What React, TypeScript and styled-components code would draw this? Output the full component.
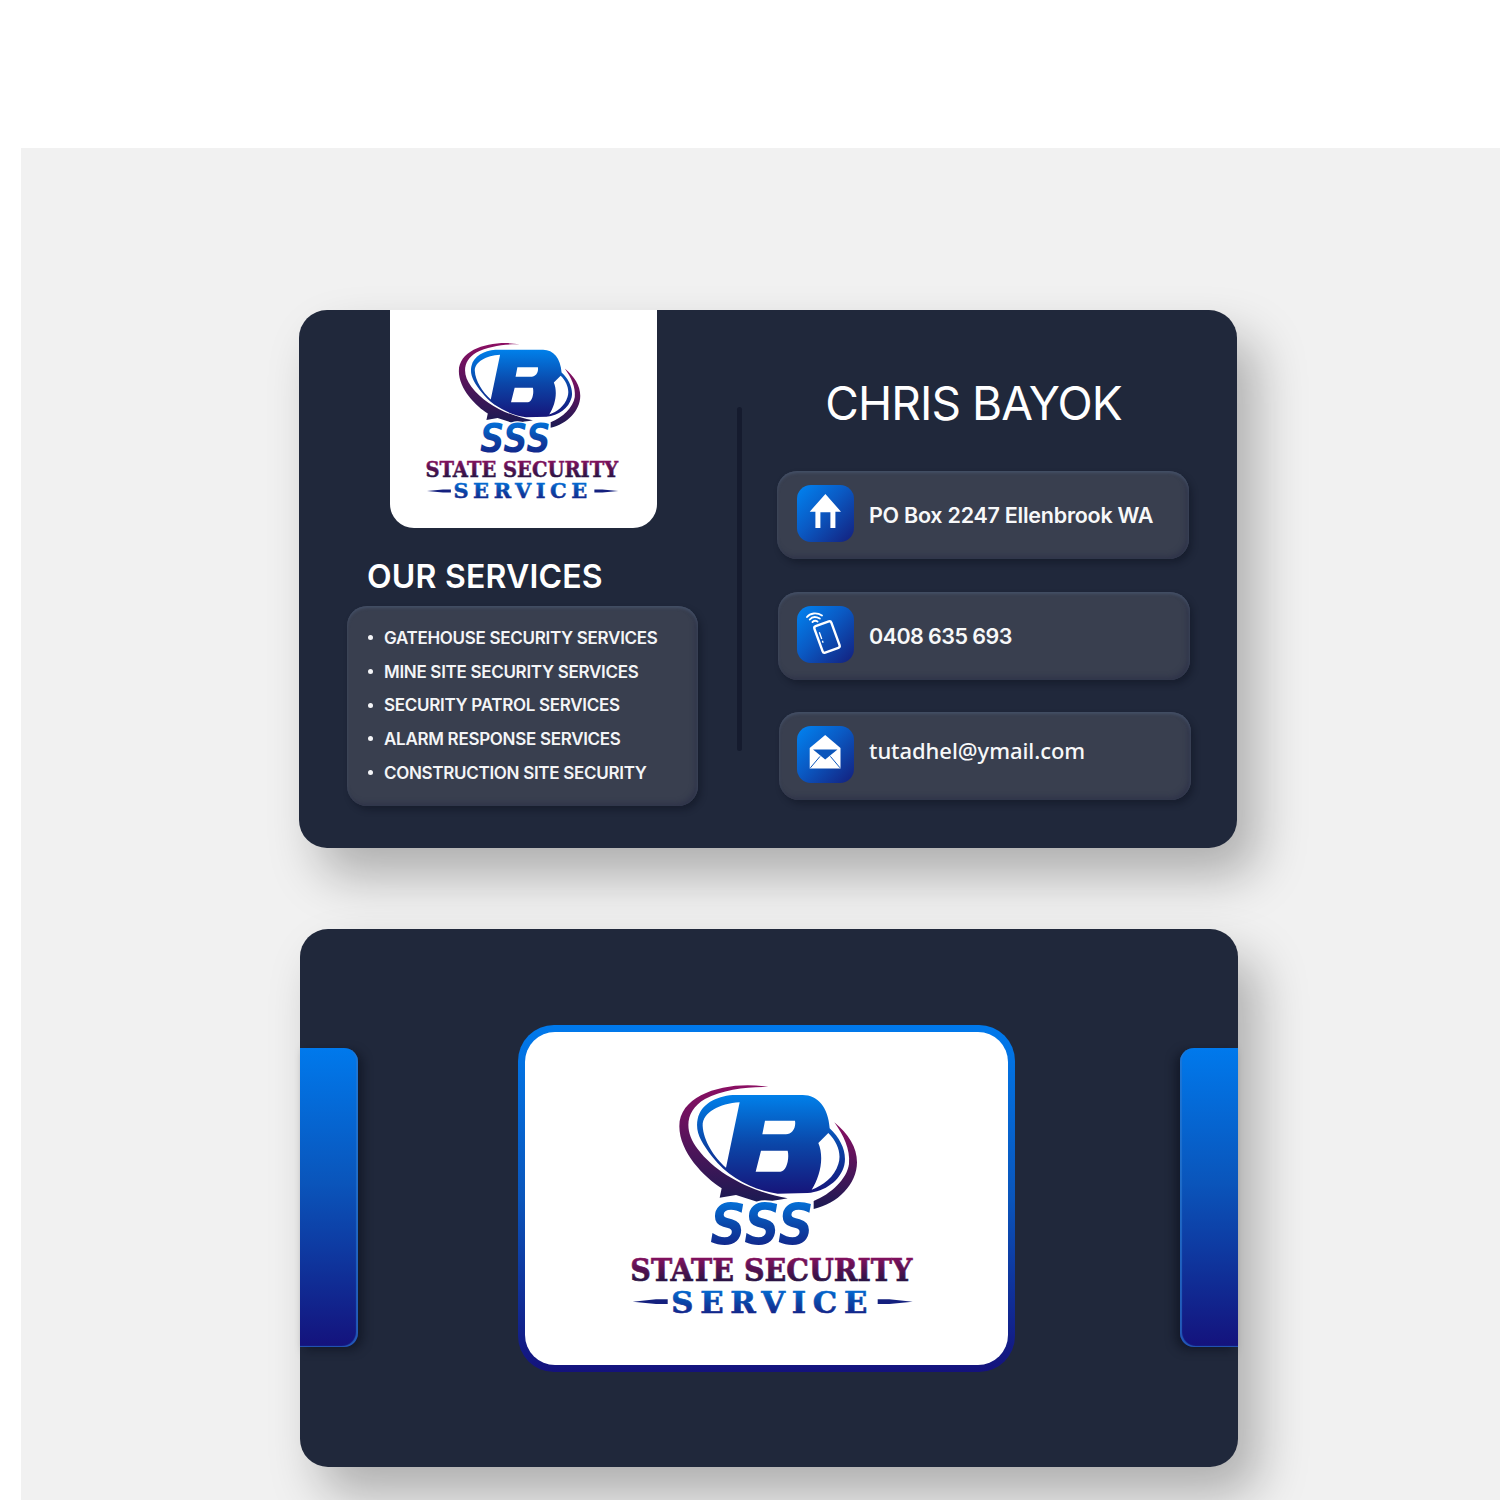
import React from 'react'
import styled, { createGlobalStyle } from 'styled-components'

const GlobalStyle = createGlobalStyle`
  html, body {
    margin: 0;
    padding: 0;
    background: #ffffff;
  }
`

const Page = styled.div`
  width: 1500px;
  height: 1500px;
  padding: 148px 0 0 21px;
  box-sizing: border-box;
  overflow: hidden;
`

const Backdrop = styled.div`
  height: 1352px;
  padding: 162px 0 0 278px;
  box-sizing: border-box;
  background: #f1f1f1;
  display: flex;
  flex-direction: column;
  gap: 81px;
  overflow: hidden;
`

const Card = styled.section<{ $shift?: number }>`
  width: 938px;
  height: 538px;
  flex: none;
  margin-left: ${(p) => p.$shift || 0}px;
  border-radius: 28px;
  background: #20283b;
  box-shadow: 20px 28px 50px rgba(0, 0, 0, 0.28);
  display: flex;
  overflow: visible;
`

const LeftColumn = styled.div`
  width: 398px;
  margin-left: 48px;
  flex: none;
  display: flex;
  flex-direction: column;
`

const LogoTab = styled.div`
  width: 267px;
  height: 218px;
  margin-left: 42.5px;
  padding: 22px 3px 0 0;
  box-sizing: border-box;
  background: #ffffff;
  border-radius: 0 0 24px 24px;
  display: flex;
  justify-content: center;
  align-items: flex-start;
`

const ServicesTitle = styled.h2`
  margin: 29px 0 9px 20px;
  color: #ffffff;
  font-family: Inter, "Noto Sans", sans-serif;
  font-size: 32px;
  line-height: 40px;
  font-weight: 600;
  letter-spacing: 0.2px;
`

const ServicesBox = styled.ul`
  width: 351px;
  height: 200px;
  margin: 0;
  padding: 15px 0 0 21px;
  box-sizing: border-box;
  list-style: none;
  background: #393f4f;
  border-radius: 20px;
  box-shadow: inset 0 2px 3px #445067, inset -3px -3px 5px #30354a, 3px 4px 6px rgba(10, 14, 28, 0.4);
`

const ServiceItem = styled.li`
  height: 33.7px;
  display: flex;
  align-items: center;
  gap: 11px;
  color: #f4f5f7;
  font-family: Inter, "Noto Sans", sans-serif;
  font-size: 17px;
  font-weight: 600;
  letter-spacing: -0.3px;
  white-space: nowrap;

  &::before {
    content: '';
    width: 5px;
    height: 5px;
    border-radius: 50%;
    background: #f4f5f7;
  }
`

const Divider = styled.div`
  width: 5px;
  height: 344px;
  margin: 97px 0 0 -8px;
  flex: none;
  border-radius: 3px;
  background: #151b2e;
`

const RightColumn = styled.div`
  margin-left: 35px;
  display: flex;
  flex-direction: column;
  align-items: flex-start;
`

const Name = styled.h1`
  width: 413px;
  height: 161px;
  margin: 0;
  padding-top: 62px;
  box-sizing: border-box;
  color: #ffffff;
  font-family: Inter, "Noto Sans", sans-serif;
  font-size: 46px;
  line-height: 62px;
  font-weight: 400;
  letter-spacing: -0.9px;
  white-space: nowrap;
  text-align: center;
  transform: translateX(-10px);
`

const ContactRow = styled.div<{ $shift: number; $gap: number }>`
  width: 412px;
  height: 88px;
  margin-left: ${(p) => p.$shift}px;
  margin-top: ${(p) => p.$gap}px;
  padding-left: ${(p) => 20 - p.$shift}px;
  box-sizing: border-box;
  border-radius: 20px;
  background: #393f4f;
  box-shadow: inset 0 2px 3px #445067, inset -3px -3px 5px #30354a, 3px 4px 6px rgba(10, 14, 28, 0.4);
  display: flex;
  align-items: center;
  gap: 15px;
`

const IconBadge = styled.div`
  width: 57px;
  height: 57px;
  margin-bottom: 3px;
  flex: none;
  border-radius: 14px;
  background: linear-gradient(135deg, #0084f2 0%, #0a5ac4 45%, #141f7c 100%);
  display: flex;
`

const ContactText = styled.span<{ $spacing: number }>`
  color: #f7f8f9;
  font-family: Inter, "Noto Sans", sans-serif;
  font-size: 21.5px;
  font-weight: 600;
  letter-spacing: ${(p) => p.$spacing}px;
  white-space: nowrap;
`

const EmailText = styled.span`
  margin-bottom: 13px;
  color: #f7f8f9;
  font-family: "Noto Sans", sans-serif;
  font-size: 22px;
  font-weight: 500;
  letter-spacing: -0.05px;
  white-space: nowrap;
`

const BackContent = styled.div`
  width: 100%;
  display: flex;
  justify-content: space-between;
  align-items: center;
`

const SideTab = styled.div<{ $side: 'left' | 'right' }>`
  width: 58px;
  height: 299px;
  margin-top: -1px;
  background: linear-gradient(180deg, #0079ec 0%, #0a55bb 45%, #14127c 100%);
  border-radius: ${(p) => (p.$side === 'left' ? '0 14px 14px 0' : '14px 0 0 14px')};
  box-shadow: ${(p) =>
    p.$side === 'left'
      ? 'inset -2px -1px 1px rgba(42, 120, 208, 0.7), 5px 3px 10px rgba(8, 12, 24, 0.5)'
      : 'inset 2px -1px 1px rgba(42, 120, 208, 0.7), -5px 3px 10px rgba(8, 12, 24, 0.5)'};
`

const LogoFrame = styled.div`
  width: 497px;
  height: 347px;
  margin: 1px 5px 0 0;
  padding: 7px;
  box-sizing: border-box;
  border-radius: 36px;
  background: linear-gradient(180deg, #0079ec 0%, #0a55bb 50%, #14127c 100%);
`

const LogoPanel = styled.div`
  width: 100%;
  height: 100%;
  padding-left: 8px;
  box-sizing: border-box;
  border-radius: 30px;
  background: #ffffff;
  display: flex;
  align-items: center;
  justify-content: center;
`

const LogoSvg = styled.svg`
  display: block;
  flex: none;
  overflow: visible;
`

const Logo = ({ id, width }: { id: string; width: number }) => (
  <LogoSvg viewBox="0 0 900 780" width={width} height={(width * 780) / 900}>
    <defs>
      <linearGradient id={`${id}-blue`} x1="0" y1="0" x2="0" y2="1">
        <stop offset="0" stopColor="#0080ea" />
        <stop offset="0.5" stopColor="#0b46a8" />
        <stop offset="1" stopColor="#16157a" />
      </linearGradient>
      <linearGradient id={`${id}-maroon`} x1="0" y1="0" x2="0" y2="1">
        <stop offset="0" stopColor="#8c0f63" />
        <stop offset="1" stopColor="#1a1a52" />
      </linearGradient>
      <linearGradient id={`${id}-word`} x1="0" y1="0" x2="0" y2="1">
        <stop offset="0.1" stopColor="#8a1060" />
        <stop offset="0.95" stopColor="#14143e" />
      </linearGradient>
    </defs>

    {/* outer swoosh */}
    <path
      fill={`url(#${id}-maroon)`}
      d="M442 54 C330 34 175 70 175 172 C175 250 250 325 302 358 L296 386 L345 378 L420 402 C450 395 480 392 500 388 C400 370 290 320 230 240 C188 185 192 125 252 90 C305 62 380 52 442 54 Z"
    />
    <path
      fill={`url(#${id}-maroon)`}
      d="M578 420 C650 405 708 345 708 280 C708 235 682 195 640 160 C668 200 688 240 684 285 C678 330 630 375 578 396 Z"
    />

    {/* blue ring and the B */}
    <path
      fill={`url(#${id}-blue)`}
      fillRule="evenodd"
      d="M335 78 L545 78 C590 78 622 115 626 178 C660 210 678 250 670 288 C658 335 612 368 560 372 L470 374 C400 365 320 325 275 265 C240 220 222 190 230 150 C240 105 285 82 335 78 Z M356 100 C295 104 245 130 245 170 C247 215 280 265 315 296 Z M432 155 L522 155 C526 178 512 196 495 196 L424 196 Z M420 245 L500 245 C506 270 496 308 478 308 L404 308 Z M592 222 L622 192 C650 220 662 255 652 285 C640 325 605 350 572 362 C598 320 610 265 592 222 Z"
    />

    <text
      x="268"
      y="528"
      textLength="310"
      lengthAdjust="spacingAndGlyphs"
      fontFamily='"DejaVu Sans", sans-serif'
      fontWeight="700"
      fontStyle="italic"
      fontSize="172"
      fill={`url(#${id}-blue)`}
      stroke="#ffffff"
      strokeWidth="10"
      paintOrder="stroke"
    >
      SSS
    </text>
    <text
      x="28"
      y="637"
      textLength="846"
      lengthAdjust="spacingAndGlyphs"
      fontFamily='"DejaVu Serif", serif'
      fontWeight="700"
      fontSize="94"
      fill={`url(#${id}-word)`}
      stroke={`url(#${id}-word)`}
      strokeWidth="2"
    >
      STATE SECURITY
    </text>
    <text
      x="151"
      y="731"
      textLength="588"
      lengthAdjust="spacing"
      fontFamily='"DejaVu Serif", serif'
      fontWeight="700"
      fontSize="92"
      fill={`url(#${id}-blue)`}
      stroke={`url(#${id}-blue)`}
      strokeWidth="2"
    >
      SERVICE
    </text>
    <path fill="#14207e" d="M35 698 L105 691 L140 691 L140 705 L105 705 Z" />
    <path fill="#14207e" d="M770 691 L805 691 L875 698 L805 705 L770 705 Z" />
  </LogoSvg>
)

const IconSvg = styled.svg`
  width: 57px;
  height: 57px;
  display: block;
`

const HouseIcon = () => (
  <IconSvg viewBox="0 0 57 57">
    <path
      fill="#ffffff"
      d="M28.4 9 L44 26.7 L38.4 26.7 L38.4 43 L33.4 43 L33.4 27.3 L23.4 27.3 L23.4 43 L18.4 43 L18.4 26.7 L12.7 26.7 Z"
    />
  </IconSvg>
)

const PhoneIcon = () => (
  <IconSvg viewBox="0 0 57 57">
    <g transform="rotate(-20 30 31)">
      <rect x="21" y="17" width="18" height="28" rx="2" fill="none" stroke="#ffffff" strokeWidth="2.4" />
      <path d="M24.4 24 L24.4 31 M24.4 33 L24.4 35" stroke="#ffffff" strokeWidth="1.3" />
    </g>
    <g fill="none" stroke="#ffffff" strokeWidth="1.9" strokeLinecap="round">
      <path d="M10 11 C13 6.8 20 6.2 25 9.5" />
      <path d="M12.8 13.5 C15 10.8 19 10.5 22.8 12.5" />
      <path d="M15.5 16 C17 14.6 18.8 14.5 20.5 15.5" />
    </g>
  </IconSvg>
)

const MailIcon = () => (
  <IconSvg viewBox="0 0 57 57">
    <path fill="#ffffff" d="M28.2 9 L43.5 22 L43.5 42.5 L12.7 42.5 L12.7 22 Z" />
    <path fill="#0a55bb" d="M16 23.5 L40.5 23.5 L28.2 33.5 Z" />
    <path fill="none" stroke="#0a55bb" strokeWidth="1" d="M13.4 41.8 L23 30.4 M43 41.8 L33.4 30.4" />
  </IconSvg>
)

const services = [
  'GATEHOUSE SECURITY SERVICES',
  'MINE SITE SECURITY SERVICES',
  'SECURITY PATROL SERVICES',
  'ALARM RESPONSE SERVICES',
  'CONSTRUCTION SITE SECURITY',
]

export default function App() {
  return (
    <Page>
      <GlobalStyle />
      <Backdrop>
        <Card>
          <LeftColumn>
            <LogoTab>
              <Logo id="small" width={205} />
            </LogoTab>
            <ServicesTitle>OUR SERVICES</ServicesTitle>
            <ServicesBox>
              {services.map((service) => (
                <ServiceItem key={service}>{service}</ServiceItem>
              ))}
            </ServicesBox>
          </LeftColumn>
          <Divider />
          <RightColumn>
            <Name>CHRIS BAYOK</Name>
            <ContactRow $shift={0} $gap={0}>
              <IconBadge>
                <HouseIcon />
              </IconBadge>
              <ContactText $spacing={-0.25}>PO Box 2247 Ellenbrook WA</ContactText>
            </ContactRow>
            <ContactRow $shift={1} $gap={33}>
              <IconBadge>
                <PhoneIcon />
              </IconBadge>
              <ContactText $spacing={-0.55}>0408 635 693</ContactText>
            </ContactRow>
            <ContactRow $shift={2} $gap={32}>
              <IconBadge>
                <MailIcon />
              </IconBadge>
              <EmailText>tutadhel@ymail.com</EmailText>
            </ContactRow>
          </RightColumn>
        </Card>

        <Card $shift={1}>
          <BackContent>
            <SideTab $side="left" />
            <LogoFrame>
              <LogoPanel>
                <Logo id="large" width={300} />
              </LogoPanel>
            </LogoFrame>
            <SideTab $side="right" />
          </BackContent>
        </Card>
      </Backdrop>
    </Page>
  )
}
